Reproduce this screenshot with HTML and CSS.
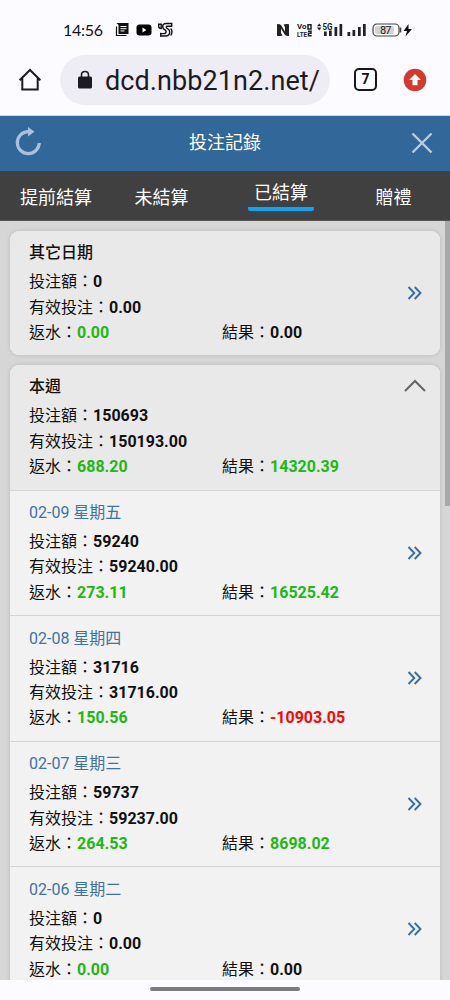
FILE: index.html
```html
<!DOCTYPE html>
<html lang="zh-Hant">
<head>
<meta charset="utf-8">
<meta name="viewport" content="width=device-width, initial-scale=1">
<title>投注記錄</title>
<link rel="stylesheet" href="styles.css">
</head>
<body>
<div class="phone">
  <header class="system">
    <div class="statusbar">
      <span class="clock">14:56</span>
      <svg class="status-left" width="60" height="16" viewBox="0 0 60 16">
        <path d="M1.500 1H13.500V12H3.500V3z" fill="#111"/>
        <path d="M1.500 4.500V13.500H11.500" fill="none" stroke="#111" stroke-width="1.200"/>
        <path d="M5.500 4.500H11.500M5.500 6.700H11.500M5.500 8.900H9.500" stroke="#fff" stroke-width="1"/>
        <rect x="21.500" y="2.500" width="15" height="11" rx="3" fill="#000"/>
        <path d="M27.500 5.500L31.500 8L27.500 10.500z" fill="#fff"/>
        <path d="M43.700 2.200H46.200V6.500Q43.700 6.500 43.700 4.500zM55.700 1.500H51.200Q47.700 1.500 47.700 4.500Q47.700 7 50.200 8Q51.700 9 50.700 11Q49.700 12 45.700 11.500V14H51.200Q54.700 13.500 54.700 10Q54.700 7.500 52.200 6.300Q50.700 5.500 51.700 4.300H56.700V1.500zM55.700 6.500Q58.200 9.500 55.700 13.500" fill="none" stroke="#111" stroke-width="1.400"/>
      </svg>
      <svg class="status-right" width="138" height="16" viewBox="0 0 138 16">
        <path d="M1 2.200Q3 1.500 5 3L9 9.500V5L7.500 2.500Q10 1.500 13 2.200V13.800Q11 14.500 9 13L5 6.500V11L6.500 13.500Q4 14.500 1 13.800z" fill="#222"/>
        <g class="volte">
          <text x="21" y="7.300" textLength="9.500" lengthAdjust="spacingAndGlyphs">Vo</text>
          <text x="21" y="14.500" textLength="10" lengthAdjust="spacingAndGlyphs">LTE</text>
        </g>
        <path d="M32 2.700H35V7H32zM32 9.300H35V11.300H32.500V13.700H35.700" fill="none" stroke="#222" stroke-width="1.500"/>
        <path d="M41 4.300L43.200 1.500L45.400 4.300zM41 5.600L43.200 8.400L45.400 5.600z" fill="#222"/>
        <text class="net" x="46.500" y="7.500" textLength="10" lengthAdjust="spacingAndGlyphs">5G</text>
        <path d="M48 9.500h2.700V14h-2.700zM53 8.500h2.700v5.500h-2.700zM58.500 5h2.700v9h-2.700zM63.500 2h2.700v12h-2.700zM71.500 10h2.700V14h-2.700zM76.500 8h2.700v6h-2.700zM82 5h2.700v9h-2.700zM87 2h2.700v12h-2.700z" fill="#222"/>
        <rect x="97" y="2" width="26" height="12" rx="4" fill="#fff" stroke="#444" stroke-width="1.200"/>
        <rect x="99" y="4" width="19" height="8" rx="2" fill="#d2d2d6"/>
        <path d="M124.500 5.500V10.500" stroke="#444" stroke-width="1.600"/>
        <text class="charge" x="104" y="12" textLength="11.500">87</text>
        <path d="M132.500 2L127.500 9H131L129.500 14.500L136 7H132.500z" fill="#111"/>
      </svg>
    </div>
    <div class="browserbar">
      <svg class="home" width="24" height="24" viewBox="0 0 24 24"><path d="M1.600 12.300L12 2L22.400 12.300M4.300 10V21.500H19.700V10" fill="none" stroke="#1b1b22" stroke-width="2"/></svg>
      <div class="address">
        <svg width="14" height="20" viewBox="0 0 14 20"><rect x="0" y="6.500" width="14" height="12" rx="1.500" fill="#1c1b22"/><path d="M3.500 8V5Q3.500 1.500 7 1.500Q10.500 1.500 10.500 5V8" fill="none" stroke="#1c1b22" stroke-width="1.600"/></svg>
        <span class="url">dcd.nbb21n2.net/</span>
      </div>
      <span class="tabcount">7</span>
      <svg class="update" width="24" height="24" viewBox="0 0 24 24"><circle cx="12" cy="12" r="11.300" fill="#d23a2e"/><path d="M12 6L18 12H14.500V17.300H9.500V12H6z" fill="#fff"/></svg>
    </div>
  </header>

  <div class="titlebar">
    <svg class="reload" width="28" height="30" viewBox="0 0 28 30"><path d="M15 5.600H13.500A11 11 0 1 0 25.300 17" fill="none" stroke="#a9c1dc" stroke-width="3.200"/><path d="M14 1L20.500 5.800L14 10.500z" fill="#a9c1dc"/></svg>
    <h1>投注記錄</h1>
    <svg class="close" width="22" height="22" viewBox="0 0 22 22"><path d="M1.500 1.500L20.500 20.500M20.500 1.500L1.500 20.500" stroke="#b9cce0" stroke-width="2.400"/></svg>
  </div>

  <nav class="tabs">
    <span class="tab">提前結算</span>
    <span class="tab">未結算</span>
    <span class="tab active">已結算</span>
    <span class="tab">贈禮</span>
  </nav>

  <main class="content">
    <div class="list">
      <section class="card">
        <article class="record summary">
          <div class="details">
            <h2>其它日期</h2>
            <p>投注額：<b>0</b></p>
            <p>有效投注：<b>0.00</b></p>
            <p class="pair"><span>返水：<b class="win">0.00</b></span><span>結果：<b>0.00</b></span></p>
          </div>
          <svg class="more" width="16" height="14" viewBox="0 0 16 14"><path d="M1.500 1L7.300 7L1.500 13M7.700 1L13.500 7L7.700 13"/></svg>
        </article>
      </section>
      <section class="card">
        <article class="record summary">
          <div class="details">
            <h2>本週</h2>
            <p>投注額：<b>150693</b></p>
            <p>有效投注：<b>150193.00</b></p>
            <p class="pair"><span>返水：<b class="win">688.20</b></span><span>結果：<b class="win">14320.39</b></span></p>
          </div>
          <svg class="collapse" width="22" height="13" viewBox="0 0 22 13"><path d="M1 12L11 2L21 12"/></svg>
        </article>
        <article class="record">
          <div class="details">
            <h3>02-09 星期五</h3>
            <p>投注額：<b>59240</b></p>
            <p>有效投注：<b>59240.00</b></p>
            <p class="pair"><span>返水：<b class="win">273.11</b></span><span>結果：<b class="win">16525.42</b></span></p>
          </div>
          <svg class="more" width="16" height="14" viewBox="0 0 16 14"><path d="M1.500 1L7.300 7L1.500 13M7.700 1L13.500 7L7.700 13"/></svg>
        </article>
        <article class="record">
          <div class="details">
            <h3>02-08 星期四</h3>
            <p>投注額：<b>31716</b></p>
            <p>有效投注：<b>31716.00</b></p>
            <p class="pair"><span>返水：<b class="win">150.56</b></span><span>結果：<b class="loss">-10903.05</b></span></p>
          </div>
          <svg class="more" width="16" height="14" viewBox="0 0 16 14"><path d="M1.500 1L7.300 7L1.500 13M7.700 1L13.500 7L7.700 13"/></svg>
        </article>
        <article class="record">
          <div class="details">
            <h3>02-07 星期三</h3>
            <p>投注額：<b>59737</b></p>
            <p>有效投注：<b>59237.00</b></p>
            <p class="pair"><span>返水：<b class="win">264.53</b></span><span>結果：<b class="win">8698.02</b></span></p>
          </div>
          <svg class="more" width="16" height="14" viewBox="0 0 16 14"><path d="M1.500 1L7.300 7L1.500 13M7.700 1L13.500 7L7.700 13"/></svg>
        </article>
        <article class="record">
          <div class="details">
            <h3>02-06 星期二</h3>
            <p>投注額：<b>0</b></p>
            <p>有效投注：<b>0.00</b></p>
            <p class="pair"><span>返水：<b class="win">0.00</b></span><span>結果：<b>0.00</b></span></p>
          </div>
          <svg class="more" width="16" height="14" viewBox="0 0 16 14"><path d="M1.500 1L7.300 7L1.500 13M7.700 1L13.500 7L7.700 13"/></svg>
        </article>
      </section>
    </div>
    <div class="scrollbar"></div>
  </main>

  <footer class="gesture"><div class="handle"></div></footer>
</div>
</body>
</html>
```
FILE: styles.css
```css
* {
  box-sizing: border-box;
}

body {
  margin: 0;
  background: #fcfbff;
  font-family: Roboto, "Noto Sans CJK TC", sans-serif;
  color: #111;
}

h1, h2, h3, p {
  margin: 0;
}

svg {
  display: block;
  flex: none;
}

.phone {
  display: flex;
  flex-direction: column;
  width: 450px;
  height: 1000px;
  overflow: hidden;
}

.system {
  flex: none;
  height: 116px;
  border-bottom: 1px solid #d3d5e0;
}

.statusbar {
  display: flex;
  align-items: center;
  height: 54px;
  padding: 6px 0 0 63px;
}

.clock {
  width: 52px;
  font-family: Lato, sans-serif;
  font-size: 16px;
  line-height: 20px;
  letter-spacing: -0.300px;
}

.status-right {
  margin-left: 101px;
}

.status-right text {
  font-family: Roboto, sans-serif;
  font-weight: 700;
  fill: #222;
}

.status-right .volte {
  font-size: 7px;
}

.status-right .net {
  font-size: 8.500px;
}

.status-right .charge {
  font-size: 11px;
  font-weight: 400;
}

.browserbar {
  display: flex;
  align-items: center;
  height: 51px;
  padding-left: 18px;
}

.address {
  display: flex;
  align-items: center;
  gap: 13px;
  width: 270px;
  height: 50px;
  margin-left: 18px;
  padding-left: 18px;
  border-radius: 25px;
  background: #eeedf6;
}

.url {
  padding-top: 2px;
  font-size: 27px;
  line-height: 32px;
  letter-spacing: 0.080px;
  white-space: nowrap;
  color: #1c1b22;
}

.tabcount {
  width: 23px;
  height: 23px;
  margin-left: 24px;
  border: 2px solid #17171d;
  border-radius: 5px;
  font-size: 14px;
  font-weight: 700;
  line-height: 19px;
  text-align: center;
}

.update {
  margin-left: 26px;
}

.titlebar {
  display: flex;
  flex: none;
  align-items: center;
  justify-content: space-between;
  height: 55px;
  padding: 0 17px 2px 14px;
  background: #32679a;
}

.titlebar h1 {
  padding-right: 3px;
  font-size: 18px;
  font-weight: 400;
  line-height: 24px;
  color: #fff;
}

.reload {
  margin-bottom: 3px;
}

.tabs {
  display: grid;
  flex: none;
  grid-template-columns: 112px 99px 140px 85px;
  align-items: center;
  justify-items: center;
  height: 49px;
  background: #404040;
}

.tab {
  padding-top: 4px;
  font-size: 18px;
  line-height: 26px;
  color: #fff;
}

.tab.active {
  width: 66px;
  margin-top: -2px;
  padding-top: 0;
  border-bottom: 4px solid #0aa5fa;
  border-radius: 2px;
  line-height: 28px;
  text-align: center;
}

.content {
  display: flex;
  flex: 1;
  min-height: 0;
  overflow: hidden;
  border-top: 1px solid #555;
  background: #d6d6d6;
}

.list {
  flex: none;
  width: 445px;
  padding: 10px 5px 0 10px;
}

.card {
  margin-bottom: 10px;
  border-radius: 9px;
  overflow: hidden;
  background: #f2f2f2;
  box-shadow: 0 0 4px rgba(0, 0, 0, 0.14);
}

.record {
  display: flex;
  align-items: center;
  justify-content: space-between;
  height: 125.600px;
  padding: 0 17px 0 19px;
  border-bottom: 1px solid #d4d4d4;
}

.record:last-child {
  height: 124px;
  border-bottom: 0;
}

.record.summary {
  background: #e9e9e9;
}

.details {
  align-self: flex-start;
  width: 340px;
  padding-top: 9.400px;
}

.details h2,
.details h3,
.details p {
  font-size: 16px;
  line-height: 25.400px;
}

.details h2 {
  margin-bottom: 3.700px;
  font-weight: 500;
}

.details h3 {
  margin-bottom: 3.700px;
  font-weight: 400;
  color: #4072a3;
}

.details b {
  font-weight: 700;
}

.pair {
  display: grid;
  grid-template-columns: 193px 1fr;
}

.win {
  color: #20b814;
}

.loss {
  color: #fb0606;
}

.more path {
  fill: none;
  stroke: #3a6da0;
  stroke-width: 1.900;
}

.collapse {
  align-self: flex-start;
  margin: 14px -3px 0 0;
}

.collapse path {
  fill: none;
  stroke: #666;
  stroke-width: 2;
}

.scrollbar {
  width: 5px;
  height: 285px;
  background: #a8a8a8;
}

.gesture {
  flex: none;
  height: 20px;
  padding-top: 7px;
  background: #fcfbff;
}

.handle {
  width: 150px;
  height: 4px;
  margin: 0 auto;
  border-radius: 2px;
  background: #7c7c7f;
}
```
